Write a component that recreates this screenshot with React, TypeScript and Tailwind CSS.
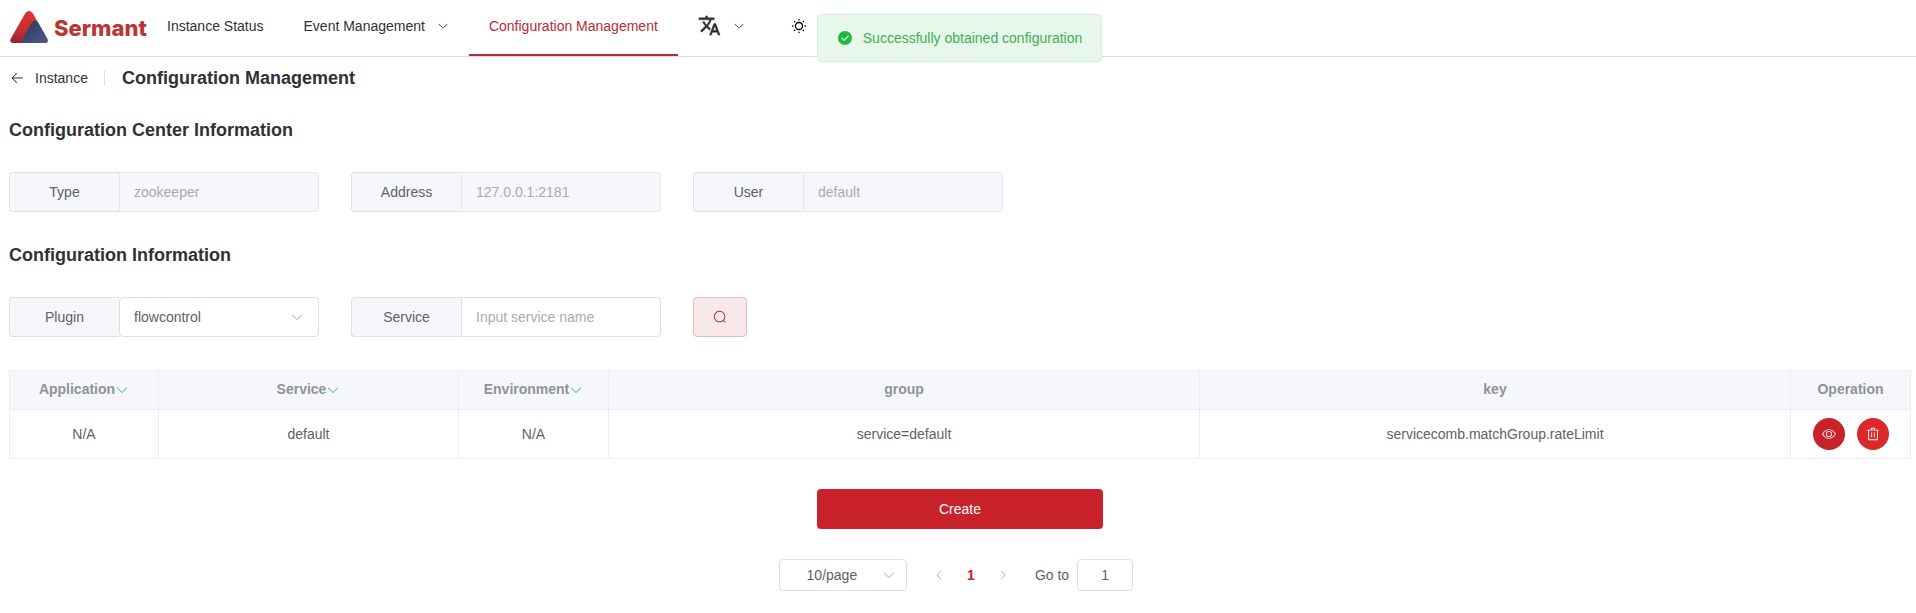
import { useState, type ReactNode } from "react";

type IconProps = { className?: string };

function Icon({ className = "", children }: IconProps & { children: ReactNode }) {
  return (
    <svg viewBox="0 0 1024 1024" fill="currentColor" aria-hidden="true" className={`shrink-0 ${className}`}>
      {children}
    </svg>
  );
}

function ArrowDown({ className }: IconProps) {
  return (
    <Icon className={className}>
      <path d="M831.872 340.864 512 652.672 192.128 340.864a30.592 30.592 0 0 0-42.752 0 29.12 29.12 0 0 0 0 41.6L489.664 714.24a32 32 0 0 0 44.672 0l340.288-331.712a29.12 29.12 0 0 0 0-41.728 30.592 30.592 0 0 0-42.752 0z" />
    </Icon>
  );
}

function Back({ className }: IconProps) {
  return (
    <Icon className={className}>
      <path d="M224 480h640a32 32 0 1 1 0 64H224a32 32 0 0 1 0-64z" />
      <path d="m237.248 512 265.408 265.344a32 32 0 0 1-45.312 45.312l-288-288a32 32 0 0 1 0-45.312l288-288a32 32 0 1 1 45.312 45.312L237.248 512z" />
    </Icon>
  );
}

function Search({ className }: IconProps) {
  return (
    <Icon className={className}>
      <path d="m795.904 750.72 124.992 124.928a32 32 0 0 1-45.248 45.248L750.656 795.904a416 416 0 1 1 45.248-45.248zM480 832a352 352 0 1 0 0-704 352 352 0 0 0 0 704z" />
    </Icon>
  );
}

function View({ className }: IconProps) {
  return (
    <Icon className={className}>
      <path d="M512 160c320 0 512 352 512 352S832 864 512 864 0 512 0 512s192-352 512-352zm0 64c-225.28 0-384.128 208.064-436.8 288 52.608 79.872 211.456 288 436.8 288 225.28 0 384.128-208.064 436.8-288-52.608-79.872-211.456-288-436.8-288zm0 64a224 224 0 1 1 0 448 224 224 0 0 1 0-448zm0 64a160.192 160.192 0 0 0-160 160c0 88.192 71.744 160 160 160s160-71.808 160-160-71.744-160-160-160z" />
    </Icon>
  );
}

function Trash({ className }: IconProps) {
  return (
    <Icon className={className}>
      <path d="M160 256H96a32 32 0 0 1 0-64h256V95.936a32 32 0 0 1 32-32h256a32 32 0 0 1 32 32V192h256a32 32 0 1 1 0 64h-64v672a32 32 0 0 1-32 32H192a32 32 0 0 1-32-32V256zm448-64v-64H416v64h192zM224 896h576V256H224v640zm192-128a32 32 0 0 1-32-32V416a32 32 0 0 1 64 0v320a32 32 0 0 1-32 32zm192 0a32 32 0 0 1-32-32V416a32 32 0 0 1 64 0v320a32 32 0 0 1-32 32z" />
    </Icon>
  );
}

function Success({ className }: IconProps) {
  return (
    <Icon className={className}>
      <path d="M512 64a448 448 0 1 1 0 896 448 448 0 0 1 0-896zm-55.808 536.384-99.52-99.584a38.4 38.4 0 1 0-54.336 54.336l126.72 126.72a38.272 38.272 0 0 0 54.336 0l262.4-262.464a38.4 38.4 0 1 0-54.272-54.336L456.192 600.384z" />
    </Icon>
  );
}

function Sunny({ className }: IconProps) {
  return (
    <Icon className={className}>
      <path
        fill="none"
        stroke="currentColor"
        strokeWidth="84"
        strokeLinecap="round"
        d="M512 288a224 224 0 1 0 0 448 224 224 0 1 0 0-448M512 96v28M512 900v28M96 512h28M900 512h28M222 222l20 20M782 782l20 20M222 802l20-20M782 242l20-20"
      />
    </Icon>
  );
}

function Translate({ className }: IconProps) {
  return (
    <svg viewBox="0 0 24 24" fill="currentColor" stroke="currentColor" strokeWidth="0.5" aria-hidden="true" className={`shrink-0 ${className}`}>
      <path d="m12.87 15.07-2.54-2.51.03-.03A17.52 17.52 0 0 0 14.07 6H17V4h-7V2H8v2H1v1.99h11.17C11.5 7.92 10.44 9.75 9 11.35 8.07 10.32 7.3 9.19 6.69 8h-2c.73 1.63 1.73 3.17 2.98 4.56l-5.09 5.02L4 19l5-5 3.11 3.11.76-2.04zM18.5 10h-2L12 22h2l1.12-3h4.75L21 22h2l-4.5-12zm-2.62 7 1.62-4.33L19.12 17h-3.24z" />
    </svg>
  );
}

function Logo() {
  return (
    <a href="#home" className="flex w-[147px] items-center gap-1.5 pl-2.5">
      <svg viewBox="0 0 38 32" aria-hidden="true" className="-mt-0.5 h-8 w-[38px] shrink-0">
        <defs>
          <linearGradient id="peak" x1="0.6" y1="0" x2="0.3" y2="1">
            <stop offset="0" stopColor="#dd3430" />
            <stop offset="0.6" stopColor="#c92e2e" />
            <stop offset="1" stopColor="#9a2630" />
          </linearGradient>
          <linearGradient id="slope" x1="0" y1="0" x2="1" y2="1">
            <stop offset="0" stopColor="#2f3860" />
            <stop offset="1" stopColor="#4a5a86" />
          </linearGradient>
        </defs>
        <path fill="url(#peak)" d="M15.4 2Q19 -2 22.6 2L37.4 28Q38.6 32 35 32H3Q-.8 32 .6 28Z" />
        <path fill="url(#slope)" d="M21.8 11.5Q24.8 8 27.8 11L37.4 28Q38.6 32 35 32H14.6Q11.4 32 12.4 28.4Z" />
      </svg>
      <span className="font-['Inter',sans-serif] text-[22px] leading-7 font-extrabold text-[#b93634]">Sermant</span>
    </a>
  );
}

function Field({ label, value }: { label: string; value: string }) {
  return (
    <label className="flex h-10 w-[310px]">
      <span className="flex w-[110px] items-center justify-center rounded-l border border-r-0 border-[#dcdfe6] bg-[#f5f7fa]">
        {label}
      </span>
      <input
        disabled
        value={value}
        className="min-w-0 flex-1 rounded-r border border-[#e4e7ed] bg-[#f5f7fa] px-3.5 text-[#a8abb2]"
      />
    </label>
  );
}

const columns = [
  { title: "Application", width: "w-[149px]", filter: true },
  { title: "Service", width: "w-[300px]", filter: true },
  { title: "Environment", width: "w-[150px]", filter: true },
  { title: "group", width: "", filter: false },
  { title: "key", width: "", filter: false },
  { title: "Operation", width: "w-[120px]", filter: false },
];

const rows = [["N/A", "default", "N/A", "service=default", "servicecomb.matchGroup.rateLimit"]];

export default function App() {
  const [service, setService] = useState("");
  const [page, setPage] = useState("1");

  return (
    <div className="bg-white font-['Liberation_Sans',Arial,sans-serif] text-sm text-[#606266]">
      <header className="flex h-[57px] border-b border-[#dcdcde] text-[#303133]">
        <Logo />
        <nav className="flex items-stretch pb-px">
          <a href="#instances" className="flex items-center px-5 pb-1">
            Instance Status
          </a>
          <button type="button" className="flex items-center gap-3 px-5 pb-1">
            Event Management
            <ArrowDown className="size-3" />
          </button>
          <a
            href="#configuration"
            aria-current="page"
            className="-mb-px flex items-center border-b-2 border-[#b62d35] px-5 pb-[3px] text-[#b62d35]"
          >
            Configuration Management
          </a>
          <button type="button" aria-label="Language" className="flex items-center gap-3 px-5 pb-1">
            <Translate className="size-[23px]" />
            <ArrowDown className="size-3" />
          </button>
          <button type="button" aria-label="Theme" className="flex items-center px-[26px] pb-1 text-black">
            <Sunny className="size-4" />
          </button>
        </nav>
      </header>

      <div className="absolute inset-x-0 top-3.5 flex justify-center pl-[3px]">
        <div
          role="status"
          className="flex h-12 items-center gap-2.5 rounded border border-[#d3f1da] bg-[#e7f7ea] px-[19px] text-[#3fae58]"
        >
          <Success className="size-4 text-[#23b83f]" />
          <span className="whitespace-nowrap">Successfully obtained configuration</span>
        </div>
      </div>

      <main className="pr-[5px] pl-[9px]">
        <div className="flex h-[42px] items-center">
          <a href="#instances" className="flex items-center gap-2.5 text-[#303133]">
            <Back className="size-4" />
            Instance
          </a>
          <span className="mr-[17px] ml-4 h-4 w-px bg-[#dcdfe6]" />
          <h1 className="text-lg font-bold text-[#303133]">Configuration Management</h1>
        </div>

        <section>
          <h2 className="mt-[17px] text-lg leading-7 font-bold text-[#303133]">Configuration Center Information</h2>
          <div className="mt-7 flex flex-wrap gap-8">
            <Field label="Type" value="zookeeper" />
            <Field label="Address" value="127.0.0.1:2181" />
            <Field label="User" value="default" />
          </div>
        </section>

        <section>
          <h2 className="mt-[29px] text-lg leading-7 font-bold text-[#303133]">Configuration Information</h2>
          <div className="mt-7 flex flex-wrap gap-8">
            <label className="relative flex h-10 w-[310px]">
              <span className="flex w-[110px] items-center justify-center rounded-l border border-r-0 border-[#dcdfe6] bg-[#f5f7fa]">
                Plugin
              </span>
              <select className="min-w-0 flex-1 appearance-none rounded border border-[#dcdfe6] bg-white px-3.5">
                <option>flowcontrol</option>
              </select>
              <ArrowDown className="pointer-events-none absolute top-[13px] right-[15px] size-3.5 text-[#a8abb2]" />
            </label>
            <label className="flex h-10 w-[310px]">
              <span className="flex w-[110px] items-center justify-center rounded-l border border-r-0 border-[#dcdfe6] bg-[#f5f7fa]">
                Service
              </span>
              <input
                value={service}
                onChange={(e) => setService(e.target.value)}
                placeholder="Input service name"
                className="min-w-0 flex-1 rounded-r border border-[#dcdfe6] bg-white px-3.5 placeholder:text-[#a8abb2]"
              />
            </label>
            <button
              type="button"
              aria-label="Search"
              className="flex h-10 w-[54px] items-center justify-center rounded border border-[#e3bdbf] bg-[#f9e8e9] text-[#b0262e]"
            >
              <Search className="size-3.5" />
            </button>
          </div>
        </section>

        <table className="mt-[33px] w-full table-fixed border-collapse text-center">
          <thead>
            <tr className="h-[39px] bg-[#f5f7fa] text-[#909399]">
              {columns.map((c) => (
                <th key={c.title} className={`border border-[#ebeef5] p-0 pb-0.5 font-bold ${c.width}`}>
                  {c.title}
                  {c.filter && <ArrowDown className="inline size-3.5 text-[#3fa9cc]" />}
                </th>
              ))}
            </tr>
          </thead>
          <tbody>
            {rows.map((row, i) => (
              <tr key={i} className="h-[49px]">
                {row.map((cell, j) => (
                  <td key={j} className="border border-[#ebeef5] p-0">
                    {cell}
                  </td>
                ))}
                <td className="border border-[#ebeef5] p-0">
                  <div className="flex justify-center gap-3">
                    <button
                      type="button"
                      aria-label="View"
                      className="flex size-8 items-center justify-center rounded-full bg-[#ca222a] text-white"
                    >
                      <View className="size-3.5" />
                    </button>
                    <button
                      type="button"
                      aria-label="Delete"
                      className="flex size-8 items-center justify-center rounded-full bg-[#da292a] text-white"
                    >
                      <Trash className="size-3.5" />
                    </button>
                  </div>
                </td>
              </tr>
            ))}
          </tbody>
        </table>

        <button type="button" className="mx-auto mt-[30px] block h-10 w-[15%] rounded bg-[#ca222a] text-white">
          Create
        </button>

        <div className="mt-[30px] mr-2 flex h-8 items-center justify-center">
          <div className="relative">
            <select
              aria-label="Page size"
              className="block h-8 w-32 appearance-none rounded border border-[#dcdfe6] bg-white pr-[34px] pl-3 [text-align-last:center]"
            >
              <option>10/page</option>
            </select>
            <ArrowDown className="pointer-events-none absolute top-[9px] right-[11px] size-3.5 text-[#a8abb2]" />
          </div>
          <div className="ml-4 flex">
            <button type="button" aria-label="Previous page" disabled className="flex size-8 items-center justify-center text-[#a8abb2]">
              <ArrowDown className="size-3 rotate-90" />
            </button>
            <button type="button" aria-current="page" className="size-8 font-bold text-[#ca222a]">
              1
            </button>
            <button type="button" aria-label="Next page" disabled className="flex size-8 items-center justify-center text-[#a8abb2]">
              <ArrowDown className="size-3 -rotate-90" />
            </button>
          </div>
          <label className="ml-4 flex items-center gap-2">
            Go to
            <input
              value={page}
              onChange={(e) => setPage(e.target.value)}
              className="h-8 w-14 rounded border border-[#dcdfe6] bg-white text-center"
            />
          </label>
        </div>
      </main>
    </div>
  );
}
